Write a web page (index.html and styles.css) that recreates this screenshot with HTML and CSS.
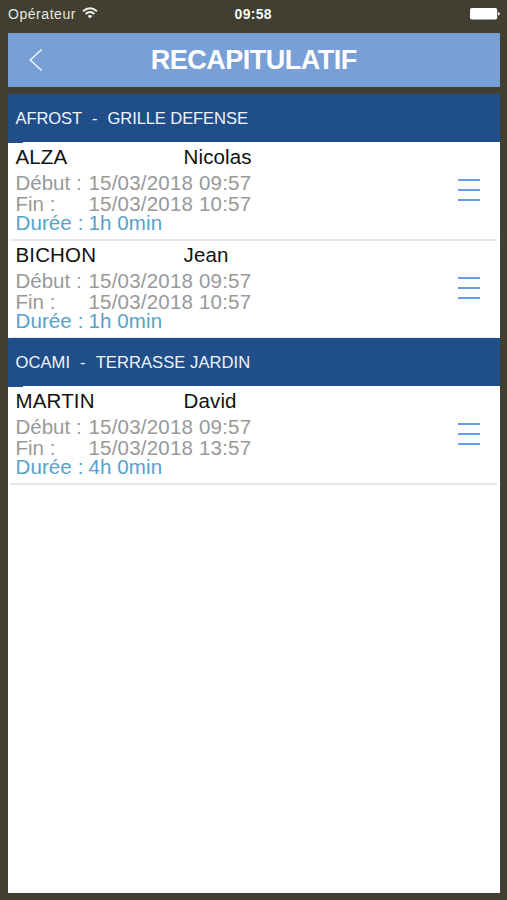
FILE: index.html
```html
<!DOCTYPE html>
<html lang="fr">
<head>
<meta charset="utf-8">
<title>Récapitulatif</title>
<link rel="stylesheet" href="styles.css">
</head>
<body>
<header class="status">
  <div class="carrier"><span>Opérateur</span>
    <svg class="wifi" width="16" height="12" viewBox="0 0 16 12"><g fill="none" stroke="#f1f1ed" stroke-width="1.9"><path d="M1 4.2Q8-1.8 15 4.2"/><path d="M3.6 7Q8 3.2 12.4 7"/></g><path d="M5.6 9Q8 7 10.4 9L8 11.4Z" fill="#f1f1ed"/></svg>
  </div>
  <time class="clock">09:58</time>
  <svg class="battery" width="30" height="12" viewBox="0 0 30 12"><rect width="27.2" height="11.6" rx="1.8" fill="#fff"/><path d="M28 4Q29.8 4.3 29.8 5.8T28 7.6Z" fill="#fff"/></svg>
</header>
<nav class="nav">
  <svg class="back" width="14" height="24" viewBox="0 0 14 24"><path d="M12.7 1.5L1.2 12L12.7 22.5" fill="none" stroke="#f4f8ff" stroke-width="1.4"/></svg>
  <h1 class="title">RECAPITULATIF</h1>
</nav>
<main class="list">
  <section>
    <h2 class="site"><span>AFROST</span><span class="dash">-</span><span>GRILLE DEFENSE</span></h2>
    <article class="row">
      <div class="names"><span>ALZA</span><span>Nicolas</span></div>
      <div class="line"><span>Début :</span><span class="value">15/03/2018 09:57</span></div>
      <div class="line"><span>Fin :</span><span class="value">15/03/2018 10:57</span></div>
      <div class="line total"><span>Durée :</span><span>1h 0min</span></div>
      <div class="handle"><i></i><i></i><i></i></div>
    </article>
    <article class="row">
      <div class="names"><span>BICHON</span><span>Jean</span></div>
      <div class="line"><span>Début :</span><span class="value">15/03/2018 09:57</span></div>
      <div class="line"><span>Fin :</span><span class="value">15/03/2018 10:57</span></div>
      <div class="line total"><span>Durée :</span><span>1h 0min</span></div>
      <div class="handle"><i></i><i></i><i></i></div>
    </article>
  </section>
  <section>
    <h2 class="site wide"><span>OCAMI</span><span class="dash">-</span><span>TERRASSE JARDIN</span></h2>
    <article class="row">
      <div class="names"><span>MARTIN</span><span>David</span></div>
      <div class="line"><span>Début :</span><span class="value">15/03/2018 09:57</span></div>
      <div class="line"><span>Fin :</span><span class="value">15/03/2018 13:57</span></div>
      <div class="line total"><span>Durée :</span><span>4h 0min</span></div>
      <div class="handle"><i></i><i></i><i></i></div>
    </article>
  </section>
</main>
</body>
</html>
```
FILE: styles.css
```css
* { box-sizing: border-box; }
body {
  margin: 0;
  height: 900px;
  padding: 0 7.5px 7.5px 8px;
  display: flex;
  flex-direction: column;
  overflow: hidden;
  background: #403f32;
  font-family: "Liberation Sans", Arial, sans-serif;
}
.status {
  height: 32.5px;
  flex: none;
  padding-bottom: 5.5px;
  display: grid;
  grid-template-columns: 1fr auto 1fr;
  align-items: center;
  color: #e9e8e0;
  font-size: 14px;
}
.carrier { display: flex; align-items: center; gap: 6px; letter-spacing: 0.55px; }
.wifi { margin-top: -2px; }
.clock { margin-right: 1px; font-weight: bold; color: #f7f7f3; letter-spacing: 0.3px; }
.battery { justify-self: end; }
.nav {
  height: 54px;
  flex: none;
  margin-bottom: 7.5px;
  display: grid;
  grid-template-columns: 40px 1fr 40px;
  align-items: center;
  background: #789fd6;
}
.back { margin-left: 20.5px; }
.title {
  margin: 0;
  text-align: center;
  color: #fff;
  font-size: 27px;
  letter-spacing: -0.48px;
  line-height: 54px;
}
.list { flex: 1; background: #fff; }
.site {
  position: relative;
  z-index: 1;
  height: 48px;
  margin: 0;
  padding-left: 7.5px;
  display: flex;
  background: #204e88;
  color: #eef5ff;
  font-size: 16.6px;
  font-weight: normal;
  letter-spacing: -0.12px;
  line-height: 49px;
  white-space: nowrap;
}
.site.wide { letter-spacing: 0.04px; }
.site::after {
  content: "";
  position: absolute;
  left: 0;
  top: 48px;
  width: 15px;
  height: 1px;
  background: #204e88;
}
.dash { margin: 0 10px; }
.row {
  position: relative;
  height: 98px;
  padding: 3px 20px 0 7.5px;
  display: grid;
  grid-template-columns: 1fr 22px;
  grid-template-rows: 28px 20.5px 19.5px 20px;
}
.row::after {
  content: "";
  position: absolute;
  left: 2px;
  right: 3px;
  top: 97px;
  height: 2px;
  background: #e7e7e7;
}
.names, .line { grid-column: 1; display: grid; white-space: nowrap; }
.names {
  grid-template-columns: 168px 1fr;
  color: #111;
  font-size: 20.5px;
  letter-spacing: 0.15px;
  line-height: 24px;
}
.line {
  grid-template-columns: 73px 1fr;
  color: #999;
  font-size: 20.5px;
  line-height: 20px;
}
.value { letter-spacing: 0.2px; }
.total { color: #55a2cc; letter-spacing: 0.1px; }
.handle {
  grid-column: 2;
  grid-row: 1 / 5;
  align-self: start;
  padding-top: 33.5px;
  display: grid;
  gap: 8px;
}
.handle i { height: 2px; background: #6799ec; }
```
